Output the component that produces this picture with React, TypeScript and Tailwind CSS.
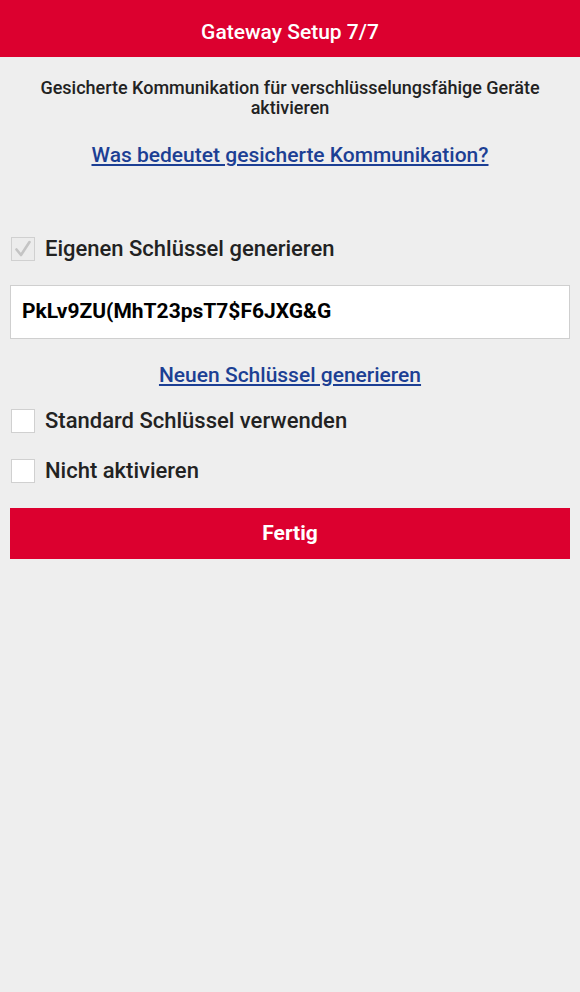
import React from "react";

function Box({ checked }: { checked?: boolean }) {
  return (
    <div
      className={`w-[24px] h-[24px] shrink-0 border border-[#d0d0d0] flex items-center justify-center ${
        checked ? "bg-[#ececec]" : "bg-white"
      }`}
    >
      {checked && (
        <svg width="20" height="20" viewBox="0 0 20 20">
          <path d="M3.5 10.5 L8 16 L16.5 3" fill="none" stroke="#c4c4c4" strokeWidth="2.6" strokeLinecap="round" strokeLinejoin="round" />
        </svg>
      )}
    </div>
  );
}

export default function App() {
  return (
    <div className="min-h-[992px] w-[580px] bg-[#eeeeee] font-['Roboto',sans-serif]">
      <div className="h-[57px] bg-[#dc002f] flex items-center justify-center pt-[6px]">
        <span className="text-white text-[21px] leading-[26px] font-medium">Gateway Setup 7/7</span>
      </div>
      <div className="px-[10px]">
        <p className="mt-[21px] text-center text-[18px] leading-[20px] font-medium text-[#222222] px-[8px]">
          Gesicherte Kommunikation für verschlüsselungsfähige Geräte aktivieren
        </p>
        <div className="mt-[24px] text-center leading-[26px]">
          <a className="text-[21px] font-medium text-[#1c3f94] underline underline-offset-[2px]">
            Was bedeutet gesicherte Kommunikation?
          </a>
        </div>
        <div className="mt-[67px] flex items-center gap-[10px] pl-[1px] h-[24px]">
          <Box checked />
          <span className="text-[22px] leading-[26px] font-medium text-[#222222]">Eigenen Schlüssel generieren</span>
        </div>
        <div className="mt-[24px] h-[54px] bg-white border border-[#cfcfcf] flex items-center px-[11px]">
          <span className="text-[21px] font-bold text-black">PkLv9ZU(MhT23psT7$F6JXG&amp;G</span>
        </div>
        <div className="mt-[23px] text-center leading-[26px]">
          <a className="text-[21px] font-medium text-[#1c3f94] underline underline-offset-[2px]">
            Neuen Schlüssel generieren
          </a>
        </div>
        <div className="mt-[19px] flex items-center gap-[10px] pl-[1px] h-[24px]">
          <Box />
          <span className="text-[22px] leading-[26px] font-medium text-[#222222]">Standard Schlüssel verwenden</span>
        </div>
        <div className="mt-[26px] flex items-center gap-[10px] pl-[1px] h-[24px]">
          <Box />
          <span className="text-[22px] leading-[26px] font-medium text-[#222222]">Nicht aktivieren</span>
        </div>
        <button className="mt-[25px] w-full h-[51px] bg-[#dc002f] text-white text-[21px] font-bold flex items-center justify-center">
          Fertig
        </button>
      </div>
    </div>
  );
}
